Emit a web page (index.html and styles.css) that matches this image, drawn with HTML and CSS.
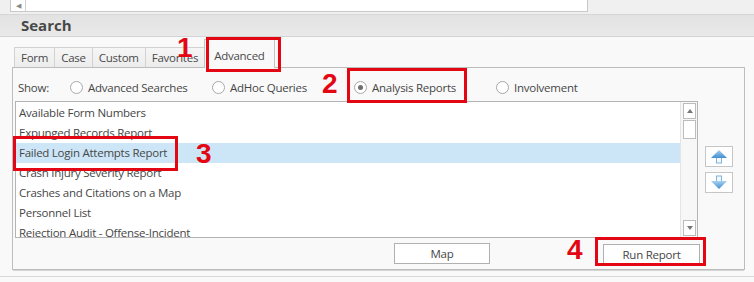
FILE: index.html
```html
<!DOCTYPE html>
<html lang="en">
<head>
  <meta charset="UTF-8" />
  <title>Search - Advanced</title>
  <link rel="stylesheet" href="styles.css">
</head>
<body>
  <div class="window">

    <!-- Top strip with the address box -->
    <div class="topbar">
      <div class="addr"><span class="scroll-left">&#9664;</span></div>
    </div>

    <div class="header">Search</div>

    <div class="panel">
      <div class="tabs">
        <div class="tab">Form</div>
        <div class="tab">Case</div>
        <div class="tab">Custom</div>
        <div class="tab">Favorites</div>
        <div class="tab active">Advanced</div>
      </div>

      <div class="page">
        <div class="show-row">
          <span class="show-label">Show:</span>
          <label class="radio"><span class="dot"></span>Advanced Searches</label>
          <label class="radio"><span class="dot"></span>AdHoc Queries</label>
          <label class="radio checked"><span class="dot"></span>Analysis Reports</label>
          <label class="radio"><span class="dot"></span>Involvement</label>
        </div>

        <div class="list-row">
          <div class="list">
            <ul class="items" id="items"></ul>
            <div class="vscroll">
              <div class="sbtn"><span class="tri up"></span></div>
              <div class="thumb"></div>
              <div class="track"></div>
              <div class="sbtn"><span class="tri down"></span></div>
            </div>
          </div>
          <div class="move-btns">
            <button class="move-btn">
              <svg width="18" height="15" viewBox="0 0 18 15">
                <defs>
                  <linearGradient id="gUp" x1="0" y1="0" x2="0" y2="1">
                    <stop offset="0" stop-color="#a9d0ee"/>
                    <stop offset="1" stop-color="#3f8fd2"/>
                  </linearGradient>
                </defs>
                <rect x="6.5" y="8" width="5" height="6" fill="#f4f8fc" stroke="#7fb2dc" stroke-width="1"/>
                <polygon points="1,9 9,1 17,9" fill="url(#gUp)"/>
              </svg>
            </button>
            <button class="move-btn">
              <svg width="18" height="15" viewBox="0 0 18 15">
                <defs>
                  <linearGradient id="gDown" x1="0" y1="0" x2="0" y2="1">
                    <stop offset="0" stop-color="#a9d0ee"/>
                    <stop offset="1" stop-color="#3f8fd2"/>
                  </linearGradient>
                </defs>
                <rect x="6.5" y="1" width="5" height="6" fill="#f4f8fc" stroke="#7fb2dc" stroke-width="1"/>
                <polygon points="1,6 17,6 9,14" fill="url(#gDown)"/>
              </svg>
            </button>
          </div>
        </div>

        <div class="actions">
          <button class="btn btn-map">Map</button>
          <button class="btn btn-run">Run Report</button>
        </div>
      </div>
      <div class="footer"></div>
    </div>

    <!-- Red callouts drawn over the screenshot -->
    <div class="mark box1"></div>
    <div class="mark box2"></div>
    <div class="mark box3"></div>
    <div class="mark box4"></div>
    <span class="num n1">1</span>
    <span class="num n2">2</span>
    <span class="num n3">3</span>
    <span class="num n4">4</span>
  </div>

  <script>
    const reports = [
      'Available Form Numbers',
      'Expunged Records Report',
      'Failed Login Attempts Report',
      'Crash Injury Severity Report',
      'Crashes and Citations on a Map',
      'Personnel List',
      'Rejection Audit - Offense-Incident'
    ];
    const items = document.getElementById('items');
    reports.forEach((name, i) => {
      const li = document.createElement('li');
      li.textContent = name;
      if (i === 2) li.classList.add('selected');
      items.appendChild(li);
    });
  </script>
</body>
</html>
```

FILE: styles.css
```css
body {
  margin: 0;
  background: #f0f0f0;
  font-family: 'Open Sans', 'Noto Sans', sans-serif;
  font-size: 11.5px;
  letter-spacing: -0.25px;
  color: #464646;
}
.window {
  position: relative;
  width: 754px;
  height: 282px;
  overflow: hidden;
}
.topbar {
  height: 14px;
  border-bottom: 1px solid #d6d6d6;
}
.addr {
  margin-left: 10px;
  width: 576px;
  height: 11px;
  background: #fff;
  border-left: 1px solid #c9c9c9;
  border-right: 1px solid #c9c9c9;
  border-bottom: 1px solid #c9c9c9;
  display: flex;
}
.scroll-left {
  width: 14px;
  border-right: 1px solid #d0d0d0;
  font-size: 7px;
  color: #8a8a8a;
  display: flex;
  align-items: center;
  justify-content: center;
}
.header {
  height: 21px;
  line-height: 21px;
  background: linear-gradient(#e2e2e2, #e9e9e9);
  border-bottom: 1px solid #d3d3d3;
  padding-left: 21px;
  font-size: 15px;
  font-weight: bold;
  letter-spacing: 0;
  color: #484848;
}
.panel {
  padding-top: 3px;
  background: #f9f9f9;
  height: 245px;
}
.tabs {
  display: flex;
  align-items: flex-end;
  height: 27px;
  padding-left: 14px;
}
.tab {
  height: 19px;
  line-height: 19px;
  padding: 0 6px;
  border: 1px solid #d2d2d2;
  border-bottom: none;
  border-right: none;
  background: linear-gradient(#f6f6f6, #ececec);
  color: #4a4a4a;
}
.tab.active {
  position: relative;
  height: 28px;
  line-height: 31px;
  margin-bottom: -1px;
  padding: 0 9px;
  background: #f9f9f9;
  border-right: 1px solid #c4c4c4;
  border-top-color: #c4c4c4;
  border-left-color: #c4c4c4;
  z-index: 1;
}
.page {
  margin-left: 12px;
  width: 733px;
  height: 203px;
  box-sizing: border-box;
  border: 1px solid #bdbdbd;
  background: #f9f9f9;
  box-shadow: 0 2px 0 -1px #d4d4d4;
}
.show-row {
  display: grid;
  grid-template-columns: 52px repeat(4, 142px);
  align-items: center;
  height: 18px;
  margin: 10px 0 5px;
  padding-left: 5px;
}
.radio {
  display: flex;
  align-items: center;
  gap: 5px;
}
.dot {
  width: 13px;
  height: 13px;
  box-sizing: border-box;
  border: 1px solid #a8a8a8;
  border-radius: 50%;
  background: #fff;
  display: flex;
  align-items: center;
  justify-content: center;
}
.radio.checked .dot::after {
  content: '';
  width: 5px;
  height: 5px;
  border-radius: 50%;
  background: #6e6e6e;
}
.list-row {
  display: flex;
  padding-left: 2px;
}
.list {
  display: flex;
  width: 683px;
  height: 137px;
  box-sizing: border-box;
  border: 1px solid #b4b4b4;
  background: #fff;
}
.items {
  flex: 1;
  list-style: none;
  margin: 0;
  padding: 1px 0 0;
  overflow: hidden;
}
.items li {
  height: 20px;
  line-height: 20px;
  padding-left: 3px;
  white-space: nowrap;
}
.items li.selected {
  background: #cde6f7;
}
.vscroll {
  width: 17px;
  box-sizing: border-box;
  padding: 1px 1px 1px 2px;
  display: flex;
  flex-direction: column;
  border-left: 1px solid #e4e4e4;
  background: #f7f7f7;
}
.sbtn, .thumb {
  box-sizing: border-box;
  border: 1px solid #bcbcbc;
  background: #fff;
}
.sbtn {
  height: 16px;
  display: flex;
  align-items: center;
  justify-content: center;
}
.thumb {
  height: 19px;
  margin-top: 1px;
}
.track {
  flex: 1;
}
.tri {
  width: 0;
  height: 0;
  border-left: 3px solid transparent;
  border-right: 3px solid transparent;
}
.tri.up {
  border-bottom: 4px solid #777;
}
.tri.down {
  border-top: 4px solid #777;
}
.move-btns {
  display: flex;
  flex-direction: column;
  gap: 5px;
  margin-left: 7px;
  padding-top: 45px;
}
.move-btn {
  width: 28px;
  height: 21px;
  padding: 0;
  border: 1px solid #c6c6c6;
  background: #fff;
  display: flex;
  align-items: center;
  justify-content: center;
}
.actions {
  display: flex;
  align-items: flex-start;
  margin-top: 5px;
}
.btn {
  height: 21px;
  padding: 0;
  border: 1px solid #b0b0b0;
  background: #fff;
  font-family: inherit;
  font-size: 11.5px;
  letter-spacing: -0.25px;
  color: #464646;
}
.btn-map {
  width: 96px;
  margin-left: 381px;
}
.btn-run {
  width: 97px;
  margin-left: 113px;
  margin-top: 1px;
}
.footer {
  margin-top: 6px;
  border-top: 1px solid #d8d8d8;
}
.mark {
  position: absolute;
  box-sizing: border-box;
  border: 3px solid #e30613;
  z-index: 5;
}
.box1 { left: 206px; top: 37px; width: 75px; height: 35px; }
.box2 { left: 347px; top: 68px; width: 120px; height: 35px; }
.box3 { left: 13px; top: 136px; width: 165px; height: 35px; }
.box4 { left: 595px; top: 237px; width: 111px; height: 29px; }
.num {
  position: absolute;
  font-family: 'Liberation Sans', Arial, sans-serif;
  font-weight: bold;
  font-size: 28px;
  line-height: 1;
  letter-spacing: 0;
  color: #e30613;
  z-index: 6;
}
.n1 { left: 177px; top: 34px; }
.n2 { left: 322px; top: 70px; }
.n3 { left: 196px; top: 140px; }
.n4 { left: 567px; top: 236px; }
```
